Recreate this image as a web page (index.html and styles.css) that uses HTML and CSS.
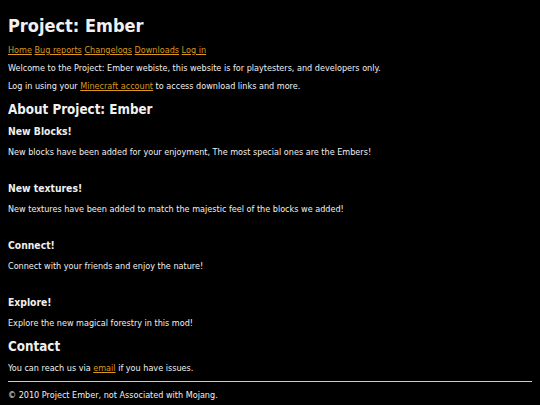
FILE: index.html
```html
<!DOCTYPE html>
<html>

<head>
  <meta charset="utf-8">
  <meta name="viewport" content="width=device-width">
  <title>Project: Ember</title>

  <link rel="stylesheet" href="styles.css">
</head>

<body>
  <header>
    <h1>Project: Ember</h1>
    <nav class="nav">
      <a href="#">Home</a>
      <a href="#">Bug reports</a>
      <a href="#">Changelogs</a>
      <a href="#">Downloads</a>
      <a href="#">Log in</a>
    </nav>
    <p>Welcome to the Project: Ember webiste, this website is for playtesters, and developers only.</p>
    <p>Log in using your <a href="#">Minecraft account</a> to access download links and more.</p>
  </header>

  <main>
    <h2>About Project: Ember</h2>

    <div class="feature">
      <h3>New Blocks!</h3>
      <p>New blocks have been added for your enjoyment, The most special ones are the Embers!</p>
    </div>

    <div class="feature">
      <h3>New textures!</h3>
      <p>New textures have been added to match the majestic feel of the blocks we added!</p>
    </div>

    <div class="feature">
      <h3>Connect!</h3>
      <p>Connect with your friends and enjoy the nature!</p>
    </div>

    <div class="feature last">
      <h3>Explore!</h3>
      <p>Explore the new magical forestry in this mod!</p>
    </div>

    <h2 class="contact">Contact</h2>
    <p>You can reach us via <a href="#">email</a> if you have issues.</p>
  </main>

  <footer>
    <p>&copy; 2010 Project Ember, not Associated with Mojang.</p>
  </footer>
</body>

</html>
```

FILE: styles.css
```css
html,
body {
  background-color: #000;
}

body {
  margin: 8px;
  color: #f0f0f0;
  font-family: "DejaVu Sans Condensed", "DejaVu Sans", Verdana, sans-serif;
  font-size: 9px;
  line-height: 11px;
}

a {
  color: #d99a1c;
}

h1 {
  font-size: 18px;
  line-height: 21px;
  margin: 7px 0 9px;
}

h2 {
  font-size: 13.3px;
  line-height: 15px;
  margin: 10px 0 8px;
}

h2.contact {
  margin-bottom: 9px;
}

h3 {
  font-size: 10.3px;
  line-height: 12px;
  margin: 8px 0 9.5px;
}

p {
  margin: 7px 0;
}

.nav {
  margin: 7px 0;
}

.feature {
  margin-bottom: 24.5px;
}

.feature.last {
  margin-bottom: 10px;
}

footer {
  border-top: 1px solid #ccc;
  margin-top: 7px;
}

footer p {
  margin-top: 8px;
}
```
